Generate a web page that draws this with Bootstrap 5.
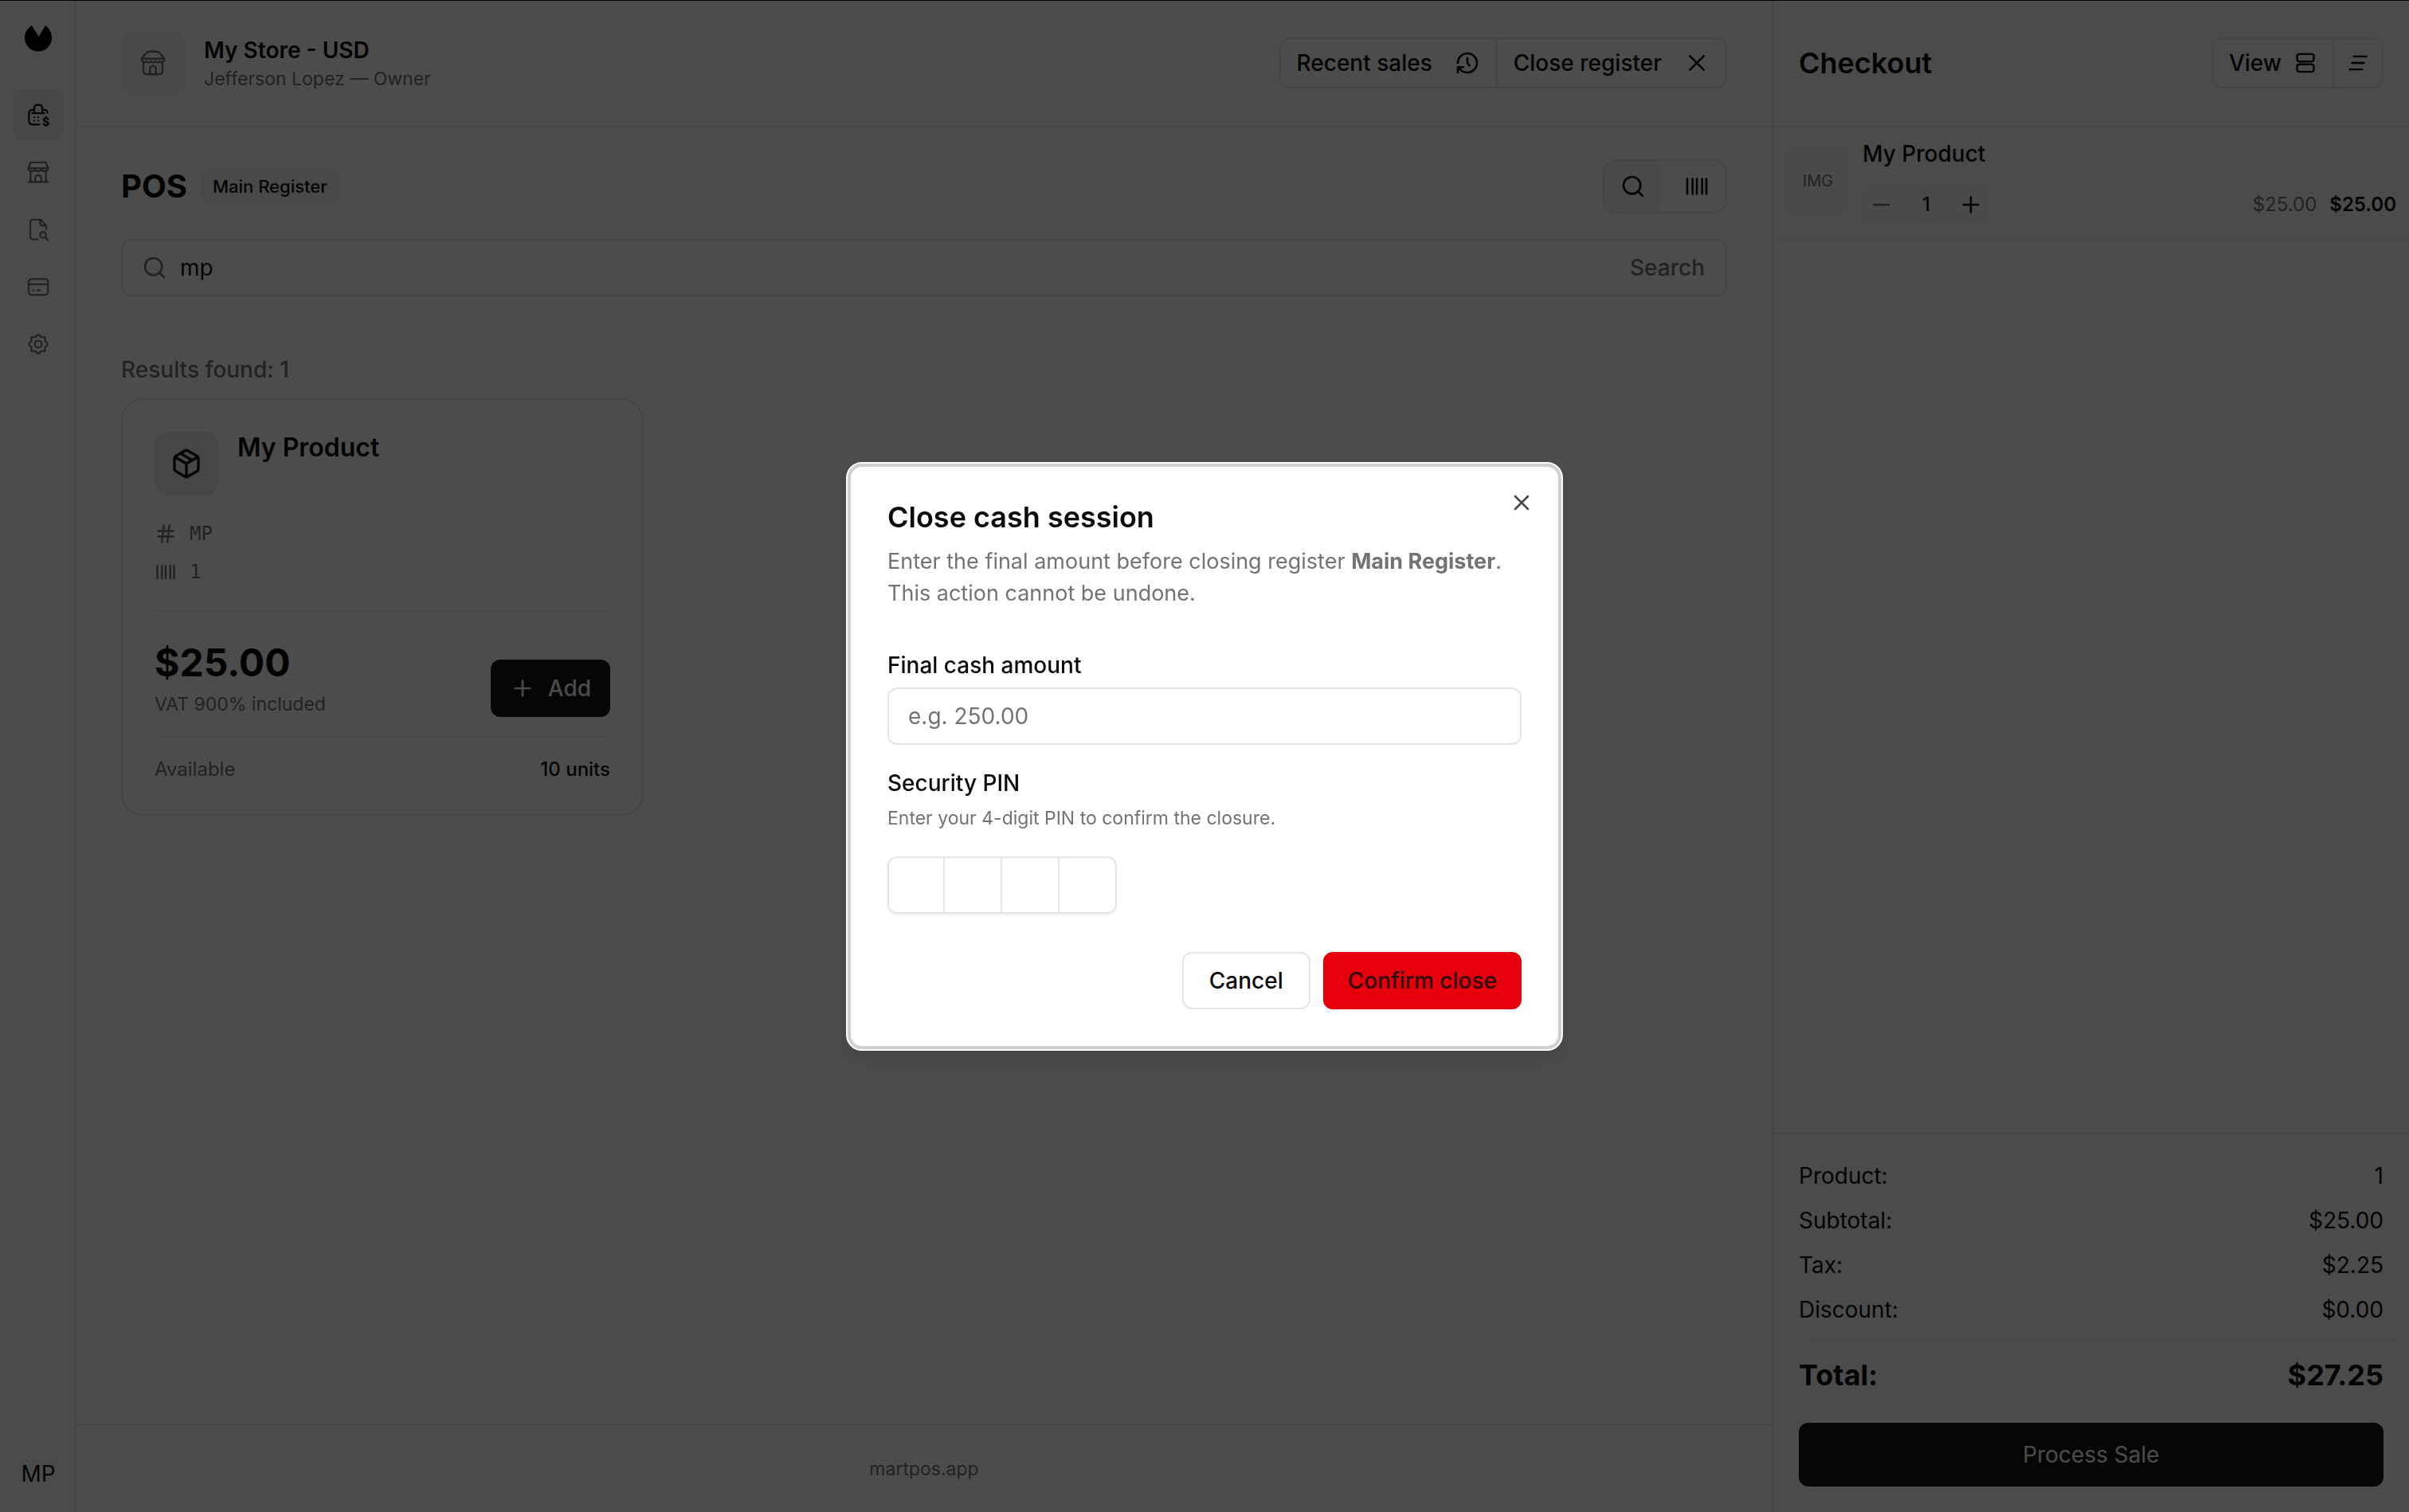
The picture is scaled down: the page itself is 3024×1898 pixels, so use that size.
<!DOCTYPE html>
<html lang="en">
<head>
<meta charset="utf-8">
<meta name="viewport" content="width=device-width, initial-scale=1">
<title>POS - My Store</title>
<link href="https://cdn.jsdelivr.net/npm/bootstrap@5.3.0/dist/css/bootstrap.min.css" rel="stylesheet">
<style>
:root{--ink:#0a0a0a;--soft:#737373;--line:#e5e5e5;--tint:#f5f5f5;--pane:#fafafa}
body{font-family:Inter,"Liberation Sans",sans-serif;font-size:28px;line-height:40px;color:var(--ink);background:#fff;min-height:100vh;border-top:1px solid #000}
svg{fill:none;stroke:currentColor;stroke-width:2;stroke-linecap:round;stroke-linejoin:round;flex:none}
.i-sm{width:28px;height:28px}
.i-nav{width:30px;height:30px;stroke-width:1.8}
.i-md{width:32px;height:32px}
.i-lg{width:36px;height:36px;stroke-width:1.6}
.soft{color:var(--soft)}
.t-xs{font-size:20px;line-height:32px}
.t-tag{font-size:22px;line-height:32px}
.t-note{font-size:23px;line-height:32px}
.t-sm{font-size:24px;line-height:32px}
.t-body{font-size:27px;line-height:40px}
.t-md{font-size:28px;line-height:40px}
.t-lg{font-size:32px;line-height:40px}
.t-xl{font-size:36px;line-height:40px}
.t-2xl{font-size:40px;line-height:48px}
.t-3xl{font-size:48px;line-height:56px}
.med{font-weight:500}
.btn{--bs-btn-font-size:28px;--bs-btn-line-height:40px;--bs-btn-color:var(--ink);--bs-btn-border-radius:12px;--bs-btn-border-width:2px}
.side{width:96px;background:var(--pane);box-shadow:inset -2px 0 var(--line);padding:23px 0 12px}
.side .nav-link{width:64px;height:64px;padding:0;border-radius:12px;color:var(--soft)}
.side .nav-link.active{background:#f0f0f0;color:var(--ink)}
.brand{height:48px;margin-bottom:40px}
.initials{width:64px;height:72px;border-radius:12px}
.top{height:159px;border-bottom:2px solid var(--line);padding-bottom:2px}
.gut{padding-left:56px;padding-right:56px}
.store-pic{width:80px;height:80px;border-radius:16px;background:var(--tint)}
.split{border:2px solid var(--line);border-radius:14px;height:64px}
.split .btn{border:0;border-radius:0;padding:0 20px}
.split .btn-icon{padding:0 16px}
.split .btn+.btn{border-left:2px solid var(--line)}
.gap-28{gap:28px}
.mode{border:2px solid var(--line);border-radius:18px;height:68px;width:156px;overflow:hidden;gap:8px}
.mode .btn{border:0;border-radius:0;padding:0;flex:1;display:flex;align-items:center;justify-content:center}
.mode .btn.on{background:var(--tint);border-radius:0 14px 14px 0}
.tag{background:var(--tint);border-radius:12px;height:44px;padding:0 16px}
.find{height:72px;border:2px solid var(--line);border-radius:14px;padding:0 26px 0 24px;margin:32px 0 48px}
.find input{border:0;padding:0;font-size:28px;background:none;color:var(--ink);outline:0}
.prod{width:656px;border:2px solid var(--line);border-radius:28px;padding:40px}
.prod-pic{width:80px;height:80px;border-radius:16px;background:#ebebeb}
.code{font-family:"DejaVu Sans Mono","Liberation Mono",monospace;font-size:24px;line-height:32px}
.rule{height:2px;background:#ededed}
.price-row{padding:36px 0 24px}
.btn-ink{--bs-btn-bg:#171717;--bs-btn-color:#fafafa;border:0}
.btn-add{height:72px;padding:0 24px}
.foot{height:111px;border-top:2px solid var(--line)}
.cart{width:800px;background:var(--pane);border-left:2px solid var(--line)}
.cart-in{padding-left:32px;padding-right:32px}
.cart-row{height:139px;border-bottom:2px solid #f0f0f0;padding:13px 16px 0}
.cart-pic{width:80px;height:80px;border-radius:12px;background:#f7f7f7;margin-top:14px}
.step{background:#f7f7f7;border-radius:12px;width:160px;height:48px}
.step .btn{border:0;padding:0 8px;line-height:0}
.sums{border-top:2px solid var(--line);padding-top:24px;padding-bottom:32px}
.sum-line{height:56px}
.sum-rule{margin:8px -16px 0 16px}
.sum-total{height:88px}
.btn-pay{height:80px}
.modal-backdrop{--bs-backdrop-opacity:.7}
.modal-dialog{--bs-modal-width:900px;max-width:900px}
.modal-content{--bs-modal-border-width:2px;border-color:#fff;border-radius:20px;padding:47px 50px 50px;box-shadow:inset 0 0 0 4px #cfcfcf,0 12px 24px rgba(0,0,0,.12)}
.intro{margin:16px 0 50px}
.pin-label{margin-top:28px}
.shut{position:absolute;top:33px;right:34px;border:0;padding:0;line-height:0;background:none;color:#4a4a4a}
.field{height:72px;border:2px solid var(--line);border-radius:12px;font-size:28px;padding:0 24px}
.field::placeholder{color:var(--soft)}
.pin input{width:72px;height:72px;border:2px solid var(--line);border-left-width:0;text-align:center;background:#fff}
.pin input:first-child{border-left-width:2px;border-radius:12px 0 0 12px}
.pin input:last-child{border-radius:0 12px 12px 0}
.pin{border-radius:12px;box-shadow:0 2px 3px rgba(0,0,0,.06)}
.act{height:72px;padding:0 32px}
.btn-out{--bs-btn-border-color:var(--line);--bs-btn-bg:#fff}
.btn-red{--bs-btn-bg:#e7000b;--bs-btn-border-color:#e7000b;--bs-btn-color:#2b0a0a;padding:0 29px}
</style>
<script src="https://cdn.jsdelivr.net/npm/bootstrap@5.3.0/dist/js/bootstrap.bundle.min.js"></script>
</head>
<body class="d-flex">

<nav class="side d-flex flex-column align-items-center flex-shrink-0" aria-label="Main">
  <a class="brand d-flex align-items-center" href="#" aria-label="Martpos">
    <svg width="36" height="36" viewBox="0 0 36 36" style="color:#000"><path fill="currentColor" stroke="none" d="M10 2 18.500 16 27 2C32 5.500 35 11 35 17.500c0 9.500-7.500 17-17 17s-17-7.500-17-17C1 11 4.500 5 10 2z"/></svg>
  </a>
  <div class="nav flex-column gap-2">
    <a class="nav-link active d-flex align-items-center justify-content-center" href="#" aria-label="Point of sale">
      <svg class="i-nav" viewBox="0 0 24 24"><path d="M8 10V5a3 3 0 0 1 3-3h2a3 3 0 0 1 3 3v5M6 10.500h12M6.500 7c-2.500 0-3.800.8-3.800 3.500V18c0 2.800 1 3.800 3.800 3.800h6.500M17.500 7c2.500 0 3.800.8 3.800 3M8 14.500v.01M12 14.500v.01M8 18v.01M12 18v.01M22 16.500c-.4-.8-1.200-1-2.300-1-1.200 0-2.100.6-2.100 1.700 0 2.300 4.500 1 4.500 3.400 0 1-.9 1.700-2.400 1.700-1 0-1.900-.4-2.200-1.200M19.800 14v1M19.800 22.500v.7"/></svg>
    </a>
    <a class="nav-link d-flex align-items-center justify-content-center" href="#" aria-label="Stores">
      <svg class="i-nav" viewBox="0 0 24 24"><path d="M4.300 10.500v11.300M19.700 10.500v11.300M2 21.800h20M9 21.800V18a3 3 0 0 1 6 0v3.800M4.500 2.200h15L22 8H2zM2 8a3.300 3.300 0 0 0 6.660 0 3.300 3.300 0 0 0 6.660 0 3.300 3.300 0 0 0 6.660 0"/></svg>
    </a>
    <a class="nav-link d-flex align-items-center justify-content-center" href="#" aria-label="Sales history">
      <svg class="i-nav" viewBox="0 0 24 24"><path d="M11.500 22H7.500C5 22 4 21 4 18.500V5.500C4 3 5 2 7.500 2H14l6 6v3.500M14 2v3.500C14 7.200 14.800 8 16.500 8H20M19.200 20l2.600 3"/><circle cx="16.800" cy="17.500" r="3"/></svg>
    </a>
    <a class="nav-link d-flex align-items-center justify-content-center" href="#" aria-label="Payments">
      <svg class="i-nav" viewBox="0 0 24 24"><rect x="2.300" y="4" width="19.500" height="16" rx="3.500"/><path d="M2.300 9.500h19.500M7 15.500h.3M11.500 15.500h2"/></svg>
    </a>
    <a class="nav-link d-flex align-items-center justify-content-center" href="#" aria-label="Settings">
      <svg class="i-nav" viewBox="0 0 24 24"><circle cx="12" cy="12" r="3.500"/><path d="M12 2.500c1.500 0 1.700 2 3 2.500s2.700-1 3.800 0c1 1.100-.5 2.500 0 3.900.4 1.200 2.700 1.500 2.700 3.100s-2.300 1.900-2.700 3.100c-.5 1.400 1 2.800 0 3.900-1.100 1-2.500-.5-3.800 0s-1.500 2.500-3 2.500-1.700-2-3-2.500-2.700 1-3.800 0c-1-1.100.5-2.500 0-3.900C4.800 13.900 2.500 13.600 2.500 12s2.300-1.900 2.700-3.100c.5-1.400-1-2.800 0-3.900 1.100-1 2.500.5 3.800 0s1.500-2.500 3-2.500z"/></svg>
    </a>
  </div>
  <button class="btn initials p-0 border-0 mt-auto" type="button">MP</button>
</nav>

<main class="flex-grow-1 d-flex flex-column">
  <header class="top gut d-flex align-items-center justify-content-between">
    <div class="d-flex align-items-center gap-4">
      <div class="store-pic soft d-flex align-items-center justify-content-center">
        <svg class="i-lg" viewBox="0 0 24 24"><path d="M4 11v7.500c0 2 .8 3 3 3h10c2.200 0 3-1 3-3V11M9.500 21.500V17a2.500 2.500 0 0 1 5 0v4.500M6 4c.8-1 1.500-1.500 3-1.500h6c1.500 0 2.200.5 3 1.500l3.500 4.500H2.500zM2.500 8.500c0 3.500 3.200 3.500 3.800 2 .8 1.500 3.300 1.500 3.900 0 .7 1.500 3 1.500 3.700 0 .6 1.500 3.100 1.500 3.900 0 .6 1.500 3.700 1.500 3.700-2"/></svg>
      </div>
      <div>
        <div class="t-md fw-semibold">My Store - USD</div>
        <div class="t-note soft">Jefferson Lopez — Owner</div>
      </div>
    </div>
    <div class="split d-flex">
      <button class="btn med d-flex align-items-center gap-28" type="button">Recent sales
        <svg class="i-md" viewBox="0 0 24 24"><path d="M3 12a9 9 0 1 1 9 9 9.750 9.750 0 0 1-6.740-2.740L3 16M3 21v-5h5M12 7.500V12l2 2.500"/></svg>
      </button>
      <button class="btn med d-flex align-items-center gap-28" type="button">Close register
        <svg class="i-md" viewBox="0 0 24 24"><path d="m18.500 5.500-13 13M5.500 5.500l13 13"/></svg>
      </button>
    </div>
  </header>

  <section class="gut flex-grow-1 d-flex flex-column pt-3 mt-4">
    <div class="d-flex align-items-center justify-content-between">
      <div class="d-flex align-items-center gap-3">
        <h1 class="t-2xl fw-bold m-0">POS</h1>
        <span class="tag t-tag med d-flex align-items-center">Main Register</span>
      </div>
      <div class="mode d-flex" role="group" aria-label="Input mode">
        <button class="btn on" type="button" aria-label="Search"><svg class="i-md" viewBox="0 0 24 24"><circle cx="11" cy="11" r="8"/><path d="m21 21-4.300-4.300"/></svg></button>
        <button class="btn" type="button" aria-label="Barcode"><svg class="i-md" viewBox="0 0 24 24"><path d="M3 5v14M8 5v14M12 5v14M17 5v14M21 5v14"/></svg></button>
      </div>
    </div>
    <div class="find d-flex align-items-center gap-3">
      <svg class="i-md soft" viewBox="0 0 24 24"><circle cx="11" cy="11" r="8"/><path d="m21 21-4.300-4.300"/></svg>
      <input class="flex-grow-1" type="text" value="mp" aria-label="Search products">
      <span class="soft med">Search</span>
    </div>
    <div class="soft med mt-4 mb-3">Results found: 1</div>
    <article class="prod">
      <div class="d-flex gap-4">
        <div class="prod-pic d-flex align-items-center justify-content-center">
          <svg width="40" height="40" viewBox="0 0 24 24"><path d="M11 21.730a2 2 0 0 0 2 0l7-4A2 2 0 0 0 21 16V8a2 2 0 0 0-1-1.730l-7-4a2 2 0 0 0-2 0l-7 4A2 2 0 0 0 3 8v8a2 2 0 0 0 1 1.730zM12 22V12M3.290 7 12 12l8.710-5M7.500 4.270l9 5.150"/></svg>
        </div>
        <h2 class="t-lg fw-semibold m-0">My Product</h2>
      </div>
      <div class="soft d-flex flex-column gap-3 mt-4 pt-2 pb-3">
        <div class="d-flex align-items-center gap-3"><svg class="i-sm" viewBox="0 0 24 24"><path d="M4 9h16M4 15h16M10 3 8 21M16 3l-2 18"/></svg><span class="code">MP</span></div>
        <div class="d-flex align-items-center gap-3"><svg class="i-sm" viewBox="0 0 24 24"><path d="M3 5v14M8 5v14M12 5v14M17 5v14M21 5v14"/></svg><span class="code">1</span></div>
      </div>
      <div class="rule mt-3"></div>
      <div class="price-row d-flex align-items-end justify-content-between">
        <div>
          <div class="t-3xl fw-bold">$25.00</div>
          <div class="t-note soft mt-2">VAT 900% included</div>
        </div>
        <button class="btn btn-ink btn-add d-flex align-items-center gap-3 med" type="button"><svg class="i-md" viewBox="0 0 24 24"><path d="M12 5v14M5 12h14"/></svg>Add</button>
      </div>
      <div class="rule"></div>
      <div class="t-sm d-flex justify-content-between pt-4">
        <span class="soft">Available</span><span class="med">10 units</span>
      </div>
    </article>
  </section>

  <footer class="foot soft t-note d-flex align-items-center justify-content-center">martpos.app</footer>
</main>

<aside class="cart flex-shrink-0 d-flex flex-column">
  <header class="top cart-in d-flex align-items-center justify-content-between">
    <h2 class="t-xl fw-semibold m-0">Checkout</h2>
    <div class="split d-flex">
      <button class="btn med d-flex align-items-center gap-3" type="button">View
        <svg class="i-sm" viewBox="0 0 24 24"><rect x="3" y="2.500" width="18" height="8" rx="2.500"/><rect x="3" y="13.500" width="18" height="8" rx="2.500"/></svg>
      </button>
      <button class="btn btn-icon d-flex align-items-center" type="button" aria-label="Sort">
        <svg class="i-sm" viewBox="0 0 24 24"><path d="M7.500 5H21M5.500 12h13M3 19h13.500"/></svg>
      </button>
    </div>
  </header>
  <div class="cart-row d-flex gap-3">
    <div class="cart-pic soft t-xs d-flex align-items-center justify-content-center">IMG</div>
    <div class="flex-grow-1">
      <div class="med">My Product</div>
      <div class="d-flex align-items-center justify-content-between mt-3 pt-1">
        <div class="step d-flex align-items-center justify-content-between">
          <button class="btn soft" type="button" aria-label="Less"><svg class="i-md" viewBox="0 0 24 24"><path d="M5 12h14"/></svg></button>
          <span class="t-sm med">1</span>
          <button class="btn" type="button" aria-label="More"><svg class="i-md" viewBox="0 0 24 24"><path d="M5 12h14M12 5v14"/></svg></button>
        </div>
        <div class="t-sm d-flex gap-3"><span class="soft">$25.00</span><span class="fw-semibold">$25.00</span></div>
      </div>
    </div>
  </div>
  <div class="sums cart-in mt-auto">
    <div class="sum-line d-flex align-items-center justify-content-between"><span>Product:</span><span>1</span></div>
    <div class="sum-line d-flex align-items-center justify-content-between"><span>Subtotal:</span><span>$25.00</span></div>
    <div class="sum-line d-flex align-items-center justify-content-between"><span>Tax:</span><span>$2.25</span></div>
    <div class="sum-line d-flex align-items-center justify-content-between"><span>Discount:</span><span>$0.00</span></div>
    <div class="rule sum-rule"></div>
    <div class="sum-total t-xl fw-bold d-flex align-items-center justify-content-between"><span>Total:</span><span>$27.25</span></div>
    <button class="btn btn-ink btn-pay w-100 mt-3" type="button">Process Sale</button>
  </div>
</aside>

<div class="modal-backdrop show"></div>
<div class="modal show d-block" tabindex="-1" role="dialog" aria-modal="true" aria-labelledby="dlg-title">
  <div class="modal-dialog modal-dialog-centered">
    <form class="modal-content">
      <h2 class="t-xl fw-semibold m-0" id="dlg-title">Close cash session</h2>
      <p class="intro t-body soft">Enter the final amount before closing register <strong>Main Register</strong>.<br>This action cannot be undone.</p>
      <label class="med mb-2" for="cash">Final cash amount</label>
      <input class="field form-control" id="cash" type="text" placeholder="e.g. 250.00">
      <label class="pin-label med" for="pin1">Security PIN</label>
      <p class="t-note soft mt-2 mb-3">Enter your 4-digit PIN to confirm the closure.</p>
      <div class="pin d-flex align-self-start mt-3 mb-5">
        <input id="pin1" maxlength="1" aria-label="Digit 1"><input maxlength="1" aria-label="Digit 2"><input maxlength="1" aria-label="Digit 3"><input maxlength="1" aria-label="Digit 4">
      </div>
      <div class="d-flex justify-content-end gap-3">
        <button class="btn btn-out act med" type="button">Cancel</button>
        <button class="btn btn-red act med" type="submit">Confirm close</button>
      </div>
      <button class="shut" type="button" aria-label="Close"><svg class="i-md" viewBox="0 0 24 24"><path d="M18 6 6 18M6 6l12 12"/></svg></button>
    </form>
  </div>
</div>
</body>
</html>
